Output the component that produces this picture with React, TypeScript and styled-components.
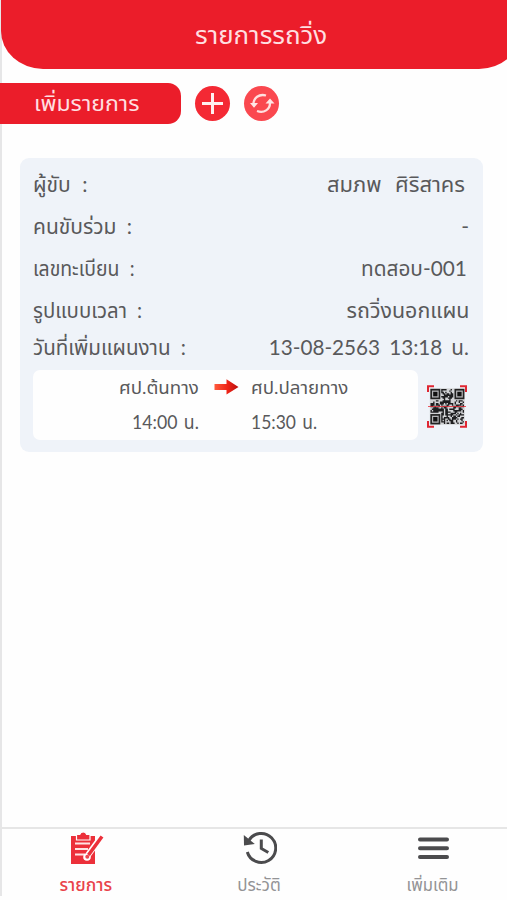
import React from "react";
import styled, { createGlobalStyle } from "styled-components";

const GlobalStyle = createGlobalStyle`
  * { box-sizing: border-box; }
  body { margin: 0; background: #fefefe; font-family: Lato, "Noto Sans Thai", "Noto Sans", sans-serif; }
`;

const Page = styled.div`
  width: 507px;
  height: 900px;
  display: flex;
  flex-direction: column;
  background: linear-gradient(to right, #e6e6e7 2px, #fefefe 2px) no-repeat 0 0 / 100% 896px;
  overflow: hidden;
`;

const Text = styled.span<{
  $size?: number;
  $stretch?: number;
  $gap?: number;
  $weight?: number;
  $from?: "left" | "right" | "center";
}>`
  display: block;
  white-space: pre;
  font-size: ${(p) => p.$size ?? 21}px;
  font-weight: ${(p) => p.$weight ?? 400};
  word-spacing: ${(p) => p.$gap ?? 0}px;
  line-height: 24px;
  transform: scaleX(${(p) => p.$stretch ?? 1});
  transform-origin: ${(p) => p.$from ?? "left"} center;
`;

const Header = styled.header`
  flex: none;
  height: 69px;
  width: 520px;
  margin-left: 1px;
  padding: 23px 0 0 194px;
  color: #ffdfe0;
  background: #eb1d2a;
  border-radius: 0 0 42px 42px / 0 0 38px 38px;
`;

const Toolbar = styled.div`
  display: flex;
  align-items: center;
  height: 41px;
  margin-top: 14px;
`;

const AddLabel = styled.div`
  width: 181px;
  height: 41px;
  padding: 8px 0 0 34px;
  color: #ffdfe0;
  background: #eb1d2a;
  border-radius: 0 13px 13px 0;
`;

const RoundButton = styled.button<{ $color: string; $gap: number }>`
  width: 35px;
  height: 35px;
  margin: 0 0 0 ${(p) => p.$gap}px;
  padding: 0;
  border: 0;
  border-radius: 50%;
  background: ${(p) => p.$color};
  svg { display: block; }
`;

const Card = styled.section`
  flex: none;
  width: 463px;
  height: 294px;
  margin: 34px 0 0 20px;
  padding: 14px 14px 12px 13px;
  background: #eff3f9;
  border-radius: 9px;
  color: #59595b;
`;

const Row = styled.div<{ $height?: number; $inset?: number }>`
  display: flex;
  justify-content: space-between;
  height: ${(p) => p.$height ?? 42}px;
  padding-right: ${(p) => p.$inset ?? 0}px;
`;

const Trip = styled.div`
  display: flex;
  align-items: center;
`;

const Stops = styled.div`
  display: grid;
  grid-template-columns: 166px 52px 1fr;
  grid-template-rows: 35px 24px;
  width: 385px;
  height: 70px;
  padding-top: 5px;
  background: #fefefe;
  border-radius: 7px;
`;

const Origin = styled.div`
  display: flex;
  justify-content: flex-end;
`;

const ArrowCell = styled.div`
  padding: 3px 0 0 15px;
  svg { display: block; }
`;

const QrSlot = styled.div`
  margin: 3px 0 0 9px;
  svg { display: block; }
`;

const Nav = styled.nav`
  display: grid;
  grid-template-columns: 172px 174px 174px;
  height: 73px;
  margin-top: auto;
  border-top: 2px solid #e6e6e6;
`;

const NavItem = styled.a<{ $color: string }>`
  display: flex;
  flex-direction: column;
  align-items: center;
  color: ${(p) => p.$color};
  svg { display: block; height: 38px; margin-bottom: 6px; }
`;

const finderAt = (x: number, y: number) =>
  [[0, 0], [18, 0], [0, 18]].some(([a, b]) => x >= a - 1 && x <= a + 7 && y >= b - 1 && y <= b + 7);

const modules: string[] = [];
let seed = 71;
for (let y = 0; y < 25; y++) {
  for (let x = 0; x < 25; x++) {
    seed = (seed * 1103515245 + 12345) % 2147483648;
    if (!finderAt(x, y) && (seed >> 12) % 100 < 58) modules.push(`M${x} ${y}h1v1h-1z`);
  }
}

const QrCode = () => (
  <svg width="40" height="43" viewBox="0 0 40 43">
    <g transform="translate(3.5 4) scale(1.34 1.4)">
      <rect x="-.5" y="-.5" width="26" height="26" fill="#d2d3d6" />
      <path d={modules.join("")} fill="#1e1e20" />
      {[[0, 0], [18, 0], [0, 18]].map(([x, y]) => (
        <g key={`${x}-${y}`} transform={`translate(${x} ${y})`}>
          <rect x=".5" y=".5" width="6.200" height="6.200" fill="#b5b6b9" stroke="#222" strokeWidth="1.200" />
          <rect x="2" y="2" width="3.200" height="3.200" fill="#111" />
        </g>
      ))}
    </g>
    <path d="M1 7V1.200H7M33 1.200h6V7M1 36v5.800H7M33 41.800h6V36" fill="none" stroke="#df2632" strokeWidth="2" />
    <path d="M1 21.500h38" stroke="#e52c36" strokeWidth="1" strokeOpacity=".8" />
  </svg>
);

const Arrow = () => (
  <svg width="25" height="18" viewBox="0 0 25 18">
    <defs>
      <linearGradient id="arrowFill">
        <stop offset="0" stopColor="#ff5a3c" />
        <stop offset=".55" stopColor="#ee2417" />
        <stop offset="1" stopColor="#b9100d" />
      </linearGradient>
    </defs>
    <path d="M.5 6H12.500V1.200L24.500 9 12.500 16.500V12H.5z" fill="url(#arrowFill)" />
  </svg>
);

export default function App() {
  return (
    <>
      <GlobalStyle />
      <Page>
        <Header>
          <Text $size={24} $stretch={1.08}>รายการรถวิ่ง</Text>
        </Header>
        <Toolbar>
          <AddLabel>
            <Text $size={22} $stretch={1.05}>เพิ่มรายการ</Text>
          </AddLabel>
          <RoundButton $color="#f42934" $gap={14}>
            <svg width="35" height="35" viewBox="0 0 35 35">
              <path d="M17.500 7v21M7 17.500h21" stroke="#fff0f0" strokeWidth="3" />
            </svg>
          </RoundButton>
          <RoundButton $color="#fa484f" $gap={14}>
            <svg width="35" height="35" viewBox="0 0 35 35">
              <g fill="none" stroke="#ffe0df" strokeWidth="2.300">
                <path d="M9.500 18C9.500 12 15 7.500 22 9.500" />
                <path d="M26 17C26 23.500 20 27.500 13 25" />
              </g>
              <path d="M6 17h8l-4 4.800zM21.500 17.500l4.500-5 4.500 5z" fill="#ffe6e5" />
            </svg>
          </RoundButton>
        </Toolbar>
        <Card>
          <Row $inset={4}>
            <Text $stretch={1} $gap={6}>ผู้ขับ :</Text>
            <Text $stretch={1.045} $gap={1} $from="right">สมภพ  ศิริสาคร</Text>
          </Row>
          <Row>
            <Text $stretch={1} $gap={5}>คนขับร่วม :</Text>
            <Text>-</Text>
          </Row>
          <Row $inset={2}>
            <Text $stretch={0.925} $gap={6}>เลขทะเบียน :</Text>
            <Text $stretch={0.99} $from="right">ทดสอบ-001</Text>
          </Row>
          <Row $height={37}>
            <Text $stretch={0.97} $gap={5}>รูปแบบเวลา :</Text>
            <Text $stretch={1.02} $from="right">รถวิ่งนอกแผน</Text>
          </Row>
          <Row $height={35}>
            <Text $stretch={0.98} $gap={5}>วันที่เพิ่มแผนงาน :</Text>
            <Text $size={22} $stretch={0.94} $gap={4} $from="right">13-08-2563 13:18 น.</Text>
          </Row>
          <Trip>
            <Stops>
              <Origin><Text $size={18} $stretch={1.04} $from="right">ศป.ต้นทาง</Text></Origin>
              <ArrowCell><Arrow /></ArrowCell>
              <Text $size={18} $stretch={1.04}>ศป.ปลายทาง</Text>
              <Origin><Text $size={19} $stretch={0.93} $gap={2} $from="right">14:00 น.</Text></Origin>
              <span />
              <Text $size={19} $stretch={0.92} $gap={2}>15:30 น.</Text>
            </Stops>
            <QrSlot><QrCode /></QrSlot>
          </Trip>
        </Card>
        <Nav>
          <NavItem $color="#e9424a">
            <svg width="36" height="38" viewBox="0 0 36 38">
              <path d="M3 7h24v28H3z" fill="#ec303a" />
              <path d="M8.500 11V5.500h3.200a3.700 3.700 0 0 1 7 0H22V11z" fill="#ec303a" stroke="#fefefe" strokeWidth="1.200" />
              <path d="M7 14.500h15M7 20h13M7 25.500h10" stroke="#ffe3e3" strokeWidth="2" />
              <path d="M33.500 7.500 20 26" stroke="#fff" strokeWidth="6" />
              <circle cx="19" cy="28" r="3.800" fill="#fff" />
              <path d="M34 7.500 20.500 26" stroke="#ec303a" strokeWidth="3.500" />
              <circle cx="19.300" cy="27.800" r="2" fill="#ec4a52" />
            </svg>
            <Text $size={17} $stretch={1.02} $from="center" $weight={500}>รายการ</Text>
          </NavItem>
          <NavItem $color="#939395">
            <svg width="36" height="38" viewBox="0 0 36 38">
              <g transform="translate(1.800 0)">
                <path d="M6 11.500A14.500 14.500 0 1 1 4.500 23" fill="none" stroke="#4b4b4d" strokeWidth="3" />
                <path d="m1 6 .2 10.500L12 15z" fill="#4b4b4d" />
                <path d="M18.500 10.500v9l7 4" fill="none" stroke="#4b4b4d" strokeWidth="3" />
              </g>
            </svg>
            <Text $size={17} $from="center">ประวัติ</Text>
          </NavItem>
          <NavItem $color="#939395">
            <svg width="36" height="38" viewBox="0 0 36 38">
              <path d="M5 10.500h27M5 19.300h27M5 28h27" stroke="#4b4b4d" strokeWidth="4" strokeLinecap="round" />
            </svg>
            <Text $size={17} $stretch={0.98} $from="center">เพิ่มเติม</Text>
          </NavItem>
        </Nav>
      </Page>
    </>
  );
}
